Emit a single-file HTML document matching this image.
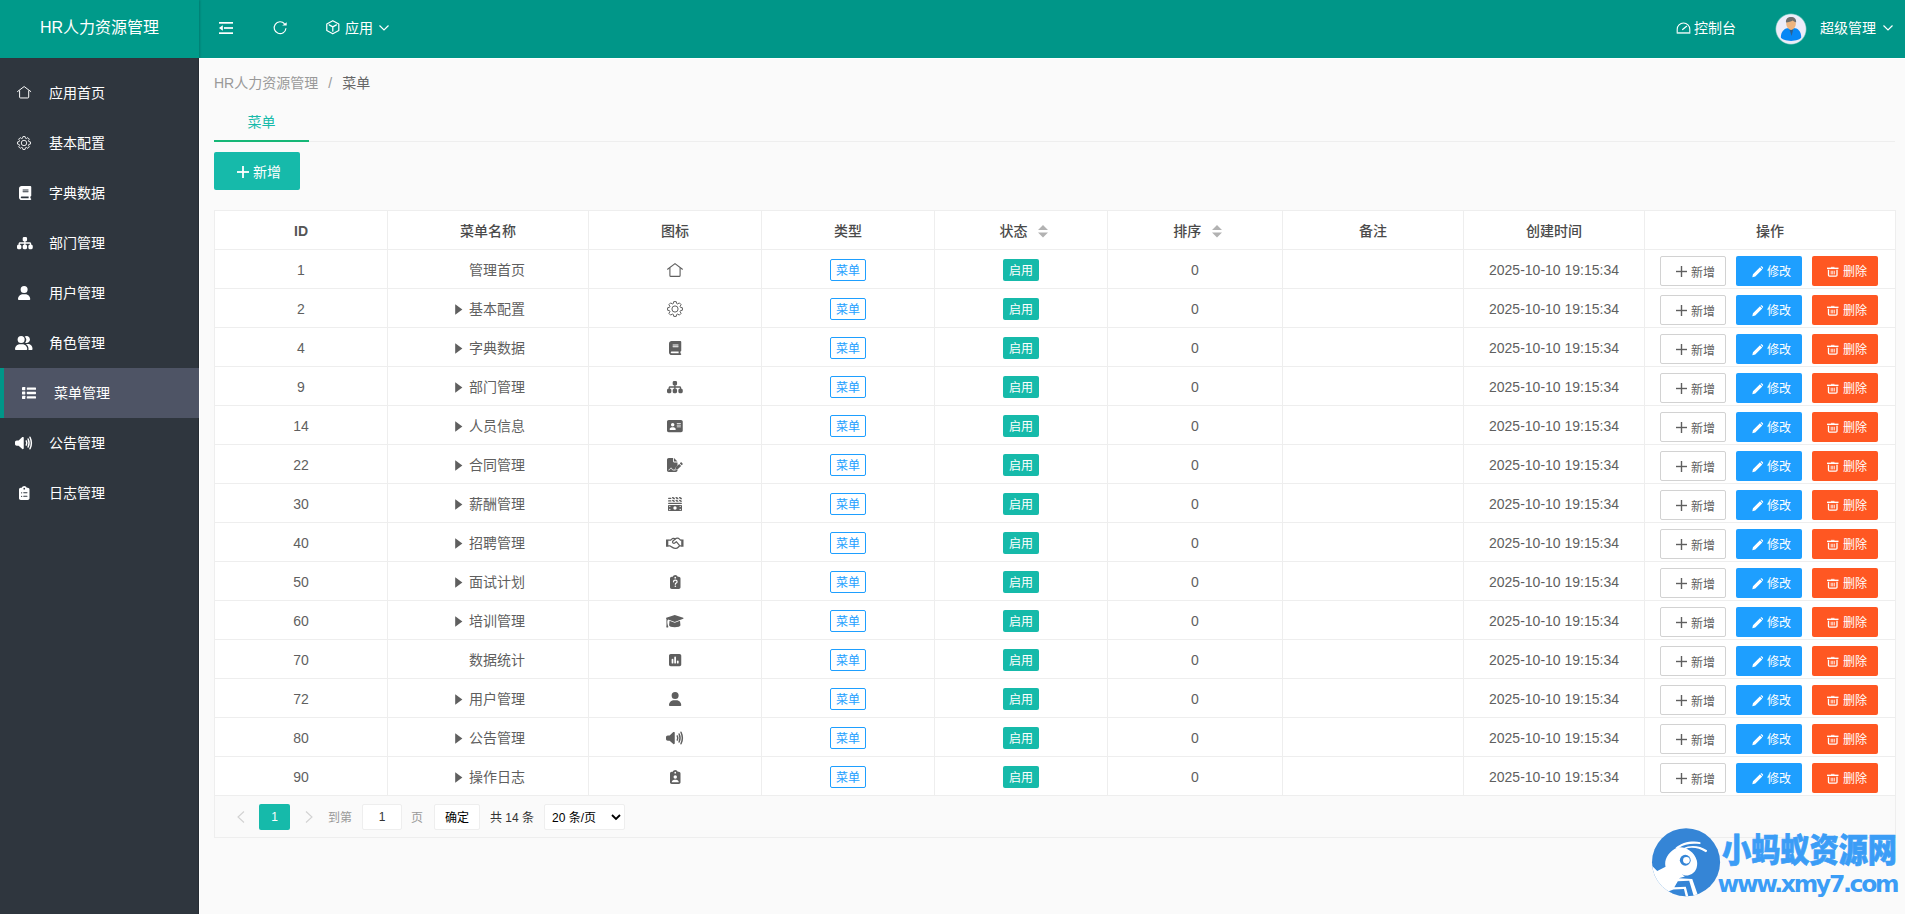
<!DOCTYPE html>
<html lang="zh-CN">
<head>
<meta charset="utf-8">
<title>HR人力资源管理</title>
<style>
*{box-sizing:border-box;margin:0;padding:0}
html,body{width:1905px;height:914px;overflow:hidden}
body{font-family:"Liberation Sans","Noto Sans CJK SC",sans-serif;font-size:14px;color:#333;background:#fafafa;position:relative;line-height:1}
svg{display:block;overflow:visible}
.a{position:absolute;white-space:nowrap}
.hd{position:absolute;left:0;top:0;width:1905px;height:58px;background:#009688}
.logo{position:absolute;left:0;top:0;width:199px;height:58px;background:#009a8a;box-shadow:1px 0 2px rgba(0,0,0,.18)}
.logo span{position:absolute;left:0;width:199px;top:0;line-height:55px;text-align:center;color:#fff;font-size:16px}
.ht{position:absolute;top:0;line-height:56px;height:58px;color:#fff;font-size:14px;white-space:nowrap}
.side{position:absolute;left:0;top:58px;width:199px;height:856px;background:#2f363e;box-shadow:inset -1px 0 1px rgba(0,0,0,.18)}
.it{position:absolute;left:0;width:199px;height:50px;color:#fff;font-size:14px}
.it span{position:absolute;left:49px;top:0;line-height:50px;white-space:nowrap}
.it.on{background:#4e5465}
.it.on i{position:absolute;left:0;top:0;width:4px;height:50px;background:#009688}
.it.on span{left:54px}
.main{position:absolute;left:199px;top:58px;width:1706px;height:856px;background:#fafafa;border-left:1px solid #fff;border-top:1px solid #fff}
.bc{position:absolute;left:214px;top:73px;font-size:14px;line-height:20px;color:#999;white-space:nowrap}
.bc b{font-weight:normal;color:#666}
.bc i{font-style:normal;display:inline-block;width:24px;text-align:center;color:#999}
.tabline{position:absolute;left:214px;top:141px;width:1681px;height:1px;background:#eee}
.tabon{position:absolute;left:214px;top:140px;width:95px;height:2px;background:#16b777}
.tabt{position:absolute;left:214px;top:101px;width:95px;line-height:42px;text-align:center;color:#16baaa;font-size:14px}
.badd{position:absolute;left:214px;top:152px;width:86px;height:38px;background:#16baaa;border-radius:2px;color:#fff}
.badd span{position:absolute;left:39px;top:0;line-height:41px;font-size:14px}
.tv{position:absolute;left:214px;top:210px;width:1682px;height:628px;border:1px solid #eee;background:#fafafa}
.tw{position:absolute;left:0;top:0;width:1680px;height:585px;background:#fff}
.hl{position:absolute;left:0;width:1680px;height:1px;background:#eee}
.vl{position:absolute;top:0;width:1px;height:585px;background:#eee}
.c{position:absolute;height:38px;line-height:40px;text-align:center;font-size:14px;color:#5f5f5f;white-space:nowrap}
.th{font-weight:500;color:#4a4a4a}
.idb{font-weight:bold;color:#555}
.bdg{position:absolute;width:36px;height:22px;line-height:24px;border-radius:2px;font-size:12px;text-align:center}
.bdg.r{border:1px solid #1e9fff;color:#1e9fff;background:#fff;line-height:22px}
.bdg.g{background:#16baaa;color:#fff}
.btn{position:absolute;width:66px;height:30px;border-radius:2px;font-size:12px;color:#fff}
.btn span{position:absolute;top:0;line-height:33px;white-space:nowrap}
.btn.p{border:1px solid #d2d2d2;background:#fff;color:#5f5f5f}
.btn.b{background:#1e9fff}
.btn.o{background:#ff5722}
.pg{font-size:12px;line-height:28px;height:26px;top:8px;overflow:hidden}
</style>
</head>
<body>
<div class="hd">
<div class="logo"><span>HR人力资源管理</span></div>
<svg class="a" style="left:219px;top:22px" width="14" height="12" viewBox="0 0 14 12" fill="#fff"><rect x="0" y="0" width="14" height="1.7"/><rect x="5" y="5.15" width="9" height="1.7"/><rect x="0" y="10.3" width="14" height="1.7"/><path d="M0 6 L3.8 3.2 V8.800z"/></svg>
<svg class="a" style="left:268px;top:16px" width="24" height="24" viewBox="0 0 24 24"><path d="M17.960 12.200 A5.900 5.900 0 1 1 16.600 7.900" fill="none" stroke="#fff" stroke-width="1.150"/><path d="M18.700 6.300 V9.550 H14.200z" fill="#fff"/></svg>
<svg class="a" style="left:326.400px;top:20.100px" width="13.600" height="14.500" viewBox="0 0 14 14.500" preserveAspectRatio="none" fill="none" stroke="#fff" stroke-width="1.250" stroke-linejoin="round"><path d="M7 0.700 L13.200 4 V10.500 L7 13.800 L0.800 10.500 V4z"/><path d="M3.300 4.900 L7 6.900 L10.700 4.900 M7 6.900 V11.200" stroke-linecap="round"/></svg>
<div class="ht" style="left:345px">应用</div>
<svg class="a" style="left:379px;top:24.500px" width="10" height="6" viewBox="0 0 10 6" fill="none" stroke="#fff" stroke-width="1.200"><path d="M0.500 0.500 L5 5 L9.500 0.500"/></svg>
<svg class="a" style="left:1676px;top:22px" width="15" height="12" viewBox="0 0 15 12" fill="none" stroke="#fff" stroke-width="1.100"><path d="M1.200 10.500 V7.300 A6.300 6.300 0 0 1 13.800 7.300 V10.500"/><rect x="0.700" y="10" width="13.600" height="1.900" fill="#fff" fill-opacity="0.700" stroke="none"/><path d="M6.600 7.500 L10.600 4.300" stroke-linecap="round" stroke-width="1.200"/></svg>
<div class="ht" style="left:1694px">控制台</div>
<svg class="a" style="left:1765px;top:5px" width="50" height="50" viewBox="0 0 914 914"><defs><clipPath id="av"><circle cx="475" cy="440" r="272"/></clipPath><radialGradient id="avg" cx="50%" cy="50%" r="50%"><stop offset="0.880" stop-color="#fff" stop-opacity="0.900"/><stop offset="1" stop-color="#fff" stop-opacity="0"/></radialGradient></defs><circle cx="475" cy="440" r="292" fill="url(#avg)"/><circle cx="475" cy="440" r="268" fill="#edecf9"/><g clip-path="url(#av)"><path d="M290 590 C290 480 360 420 440 420 L520 420 C600 420 662 480 662 590 C662 620 560 657 476 657 C392 657 290 620 290 590z" fill="#0787f5"/><path d="M440 425 L520 425 L486 568z" fill="#2f5f8c"/><path d="M432 400 H522 V440 Q477 470 432 440z" fill="#efb47f"/><ellipse cx="476" cy="345" rx="88" ry="98" fill="#efb47f"/><path d="M384 320 C375 250 420 218 476 218 C535 218 580 255 568 322 C540 312 520 300 505 285 C480 305 430 318 384 320z" fill="#6e6e6e"/></g></svg>
<div class="ht" style="left:1820px">超级管理</div>
<svg class="a" style="left:1882.500px;top:24.500px" width="10" height="6" viewBox="0 0 10 6" fill="none" stroke="#fff" stroke-width="1.200"><path d="M0.500 0.500 L5 5 L9.500 0.500"/></svg>
</div>
<div class="side">
<div class="it" style="top:10px"><svg width="14.3" height="12.5" viewBox="0 0 16 14" fill="currentColor" style="position:absolute;left:17px;top:18.45px"><path d="M0.600 6.200 L8 0.600 L15.400 6.200" fill="none" stroke="currentColor" stroke-width="1.100" stroke-linecap="round" stroke-linejoin="miter"/><path d="M2.900 5 V12.400 Q2.900 13.400 3.900 13.400 H12.100 Q13.100 13.400 13.100 12.400 V5" fill="none" stroke="currentColor" stroke-width="1.100"/></svg><span>应用首页</span></div>
<div class="it" style="top:60px"><svg width="14" height="14" viewBox="0 0 16 16" fill="currentColor" style="position:absolute;left:17px;top:17.7px"><path d="M6.30 2.56 L6.77 0.60 L9.23 0.60 L9.70 2.56 L10.65 2.95 L12.36 1.90 L14.10 3.64 L13.05 5.35 L13.44 6.30 L15.40 6.77 L15.40 9.23 L13.44 9.70 L13.05 10.65 L14.10 12.36 L12.36 14.10 L10.65 13.05 L9.70 13.44 L9.23 15.40 L6.77 15.40 L6.30 13.44 L5.35 13.05 L3.64 14.10 L1.90 12.36 L2.95 10.65 L2.56 9.70 L0.60 9.23 L0.60 6.77 L2.56 6.30 L2.95 5.35 L1.90 3.64 L3.64 1.90 L5.35 2.95Z" fill="none" stroke="currentColor" stroke-width="1" stroke-linejoin="round"/><circle cx="8" cy="8" r="3.100" fill="none" stroke="currentColor" stroke-width="1"/></svg><span>基本配置</span></div>
<div class="it" style="top:110px"><svg width="12.25" height="14" viewBox="0 0 448 512" fill="currentColor" style="position:absolute;left:19px;top:17.7px"><path d="M96 0C43 0 0 43 0 96V416c0 53 43 96 96 96H416c17.700 0 32-14.300 32-32s-14.300-32-32-32V384c17.700 0 32-14.300 32-32V32c0-17.700-14.300-32-32-32H96zm0 384H352v64H96c-17.700 0-32-14.300-32-32s14.300-32 32-32zm32-240c0-8.800 7.200-16 16-16H336c8.800 0 16 7.200 16 16s-7.200 16-16 16H144c-8.800 0-16-7.200-16-16zm16 48H336c8.800 0 16 7.200 16 16s-7.200 16-16 16H144c-8.800 0-16-7.200-16-16s7.200-16 16-16z"/></svg><span>字典数据</span></div>
<div class="it" style="top:160px"><svg width="15.75" height="14" viewBox="0 0 576 512" fill="currentColor" style="position:absolute;left:16.5px;top:17.7px"><path d="M208 80c0-26.500 21.500-48 48-48h64c26.500 0 48 21.500 48 48v64c0 26.500-21.500 48-48 48h-8v40H464c30.900 0 56 25.100 56 56v32h8c26.500 0 48 21.500 48 48v64c0 26.500-21.500 48-48 48H464c-26.500 0-48-21.500-48-48V368c0-26.500 21.500-48 48-48h8V288c0-4.400-3.600-8-8-8H312v40h8c26.500 0 48 21.500 48 48v64c0 26.500-21.500 48-48 48H256c-26.500 0-48-21.500-48-48V368c0-26.500 21.500-48 48-48h8V280H112c-4.400 0-8 3.600-8 8v32h8c26.500 0 48 21.500 48 48v64c0 26.500-21.500 48-48 48H48c-26.500 0-48-21.500-48-48V368c0-26.500 21.500-48 48-48h8V288c0-30.900 25.100-56 56-56H264V192h-8c-26.500 0-48-21.500-48-48V80z"/></svg><span>部门管理</span></div>
<div class="it" style="top:210px"><svg width="12.25" height="14" viewBox="0 0 448 512" fill="currentColor" style="position:absolute;left:18px;top:17.7px"><path d="M224 256A128 128 0 1 0 224 0a128 128 0 1 0 0 256zm-45.700 48C79.800 304 0 383.800 0 482.300C0 498.700 13.300 512 29.700 512H418.300c16.400 0 29.700-13.300 29.700-29.700C448 383.800 368.200 304 269.700 304H178.300z"/></svg><span>用户管理</span></div>
<div class="it" style="top:260px"><svg width="17.5" height="14" viewBox="0 0 640 512" fill="currentColor" style="position:absolute;left:15px;top:17.7px"><circle cx="224" cy="128" r="128"/><path d="M178.300 304C79.800 304 0 383.800 0 482.300C0 498.700 13.300 512 29.700 512H418.300c16.400 0 29.700-13.300 29.700-29.700C448 383.800 368.200 304 269.700 304H178.300z"/><path d="M352 18 A128 128 0 1 1 372 246 A170 170 0 0 0 352 18z"/><path d="M400 296 H470 C564 296 640 372 640 466 V482 C640 498.600 626.600 512 610 512 H486 C492 500 495 488 495 476 C495 400 455 335 400 296z"/></svg><span>角色管理</span></div>
<div class="it on" style="top:310px"><i></i><svg width="14" height="14" viewBox="0 0 512 512" fill="currentColor" style="position:absolute;left:22px;top:17.7px"><rect x="0" y="40" width="120" height="112" rx="16"/><rect x="0" y="200" width="120" height="112" rx="16"/><rect x="0" y="360" width="120" height="112" rx="16"/><rect x="176" y="56" width="336" height="84" rx="20"/><rect x="176" y="214" width="336" height="84" rx="20"/><rect x="176" y="372" width="336" height="84" rx="20"/></svg><span>菜单管理</span></div>
<div class="it" style="top:360px"><svg width="17.5" height="14" viewBox="0 0 640 512" fill="currentColor" style="position:absolute;left:15px;top:17.7px"><path d="M301 34.800C312.600 40 320 51.400 320 64V448c0 12.600-7.400 24-18.900 29.200s-25 3.100-34.400-5.300L131.800 352H64c-35.300 0-64-28.700-64-64V224c0-35.300 28.700-64 64-64h67.800L266.700 40.100c9.400-8.400 22.900-10.400 34.400-5.300z"/><path d="M412 180 Q450 256 412 332" fill="none" stroke="currentColor" stroke-width="54" stroke-linecap="round"/><path d="M480 110 Q548 256 480 402" fill="none" stroke="currentColor" stroke-width="54" stroke-linecap="round"/><path d="M548 44 Q650 256 548 468" fill="none" stroke="currentColor" stroke-width="54" stroke-linecap="round"/></svg><span>公告管理</span></div>
<div class="it" style="top:410px"><svg width="10.5" height="14" viewBox="0 0 384 512" fill="currentColor" style="position:absolute;left:19px;top:17.7px"><path fill-rule="evenodd" d="M192 0c-41.800 0-77.400 26.700-90.500 64H64C28.700 64 0 92.700 0 128V448c0 35.300 28.700 64 64 64H320c35.300 0 64-28.700 64-64V128c0-35.300-28.700-64-64-64H282.500C269.400 26.700 233.800 0 192 0zm0 64a32 32 0 1 1 0 64 32 32 0 1 1 0-64z M72 248 a24 24 0 1 1 48 0 a24 24 0 1 1 -48 0z M72 376 a24 24 0 1 1 48 0 a24 24 0 1 1 -48 0z M168 232 h128 a16 16 0 0 1 0 32 h-128 a16 16 0 0 1 0 -32z M168 360 h128 a16 16 0 0 1 0 32 h-128 a16 16 0 0 1 0 -32z"/></svg><span>日志管理</span></div>
</div>
<div class="main"></div>
<div class="bc">HR人力资源管理<i>/</i><b>菜单</b></div>
<div class="tabline"></div><div class="tabon"></div><div class="tabt">菜单</div>
<div class="badd"><svg class="a" style="left:23px;top:13.700px" width="12" height="12" viewBox="0 0 12 12" fill="#fff"><rect x="0" y="5.100" width="12" height="1.800"/><rect x="5.100" y="0" width="1.800" height="12"/></svg><span>新增</span></div>
<div class="tv"><div class="tw">
<div class="vl" style="left:172px"></div>
<div class="vl" style="left:373px"></div>
<div class="vl" style="left:546px"></div>
<div class="vl" style="left:719px"></div>
<div class="vl" style="left:892px"></div>
<div class="vl" style="left:1067px"></div>
<div class="vl" style="left:1248px"></div>
<div class="vl" style="left:1429px"></div>
<div class="hl" style="top:38px"></div>
<div class="hl" style="top:77px"></div>
<div class="hl" style="top:116px"></div>
<div class="hl" style="top:155px"></div>
<div class="hl" style="top:194px"></div>
<div class="hl" style="top:233px"></div>
<div class="hl" style="top:272px"></div>
<div class="hl" style="top:311px"></div>
<div class="hl" style="top:350px"></div>
<div class="hl" style="top:389px"></div>
<div class="hl" style="top:428px"></div>
<div class="hl" style="top:467px"></div>
<div class="hl" style="top:506px"></div>
<div class="hl" style="top:545px"></div>
<div class="hl" style="top:584px"></div>
<div class="c th idb" style="left:0px;top:0px;width:172px">ID</div>
<div class="c th" style="left:173px;top:0px;width:200px">菜单名称</div>
<div class="c th" style="left:374px;top:0px;width:172px">图标</div>
<div class="c th" style="left:547px;top:0px;width:172px">类型</div>
<div class="c th" style="left:784.5px;top:0;width:28px">状态</div>
<svg class="a" style="left:822.5px;top:14.199999999999989px" width="10" height="13" viewBox="0 0 10 13" fill="#b2b2b2"><path d="M0 5 L5 0 L10 5z M0 7.500 L5 12.500 L10 7.500z"/></svg>
<div class="c th" style="left:958.3px;top:0;width:28px">排序</div>
<svg class="a" style="left:997.3px;top:14.199999999999989px" width="10" height="13" viewBox="0 0 10 13" fill="#b2b2b2"><path d="M0 5 L5 0 L10 5z M0 7.500 L5 12.500 L10 7.500z"/></svg>
<div class="c th" style="left:1068px;top:0px;width:180px">备注</div>
<div class="c th" style="left:1249px;top:0px;width:180px">创建时间</div>
<div class="c th" style="left:1430px;top:0px;width:250px">操作</div>
<div class="c " style="left:0px;top:39px;width:172px">1</div>
<div class="c" style="left:254px;top:39px;width:56px">管理首页</div>
<svg width="16" height="14" viewBox="0 0 16 14" fill="currentColor" style="position:absolute;left:452.0px;top:51.5px;color:#5f5f5f"><path d="M0.600 6.200 L8 0.600 L15.400 6.200" fill="none" stroke="currentColor" stroke-width="1.100" stroke-linecap="round" stroke-linejoin="miter"/><path d="M2.900 5 V12.400 Q2.900 13.400 3.900 13.400 H12.100 Q13.100 13.400 13.100 12.400 V5" fill="none" stroke="currentColor" stroke-width="1.100"/></svg>
<div class="bdg r" style="left:615px;top:48px">菜单</div>
<div class="bdg g" style="left:788px;top:48px">启用</div>
<div class="c " style="left:893px;top:39px;width:174px">0</div>
<div class="c " style="left:1249px;top:39px;width:180px">2025-10-10 19:15:34</div>
<div class="btn p" style="left:1445px;top:45px"><svg class="a" style="left:14.500px;top:8.500px" width="11" height="11" viewBox="0 0 11 11" fill="#5f5f5f"><rect x="0" y="4.800" width="11" height="1.400"/><rect x="4.800" y="0" width="1.400" height="11"/></svg><span style="left:30px">新增</span></div>
<div class="btn b" style="left:1521px;top:45px"><svg class="a" style="left:15.500px;top:9.500px" width="11.500" height="11.500" viewBox="0 0 12 12" fill="#fff"><path d="M0.300 11.700 L1 8.600 L8.300 1.300 L10.700 3.700 L3.400 11z M9 0.700 C9.500 0.200 10.200 0.200 10.700 0.700 L11.300 1.300 C11.800 1.800 11.800 2.500 11.300 3 L11.200 3.100 L8.900 0.800z"/></svg><span style="left:31px">修改</span></div>
<div class="btn o" style="left:1597px;top:45px"><svg class="a" style="left:15px;top:11px" width="11.500" height="9.800" viewBox="0 0 11.500 11" preserveAspectRatio="none" fill="none" stroke="#fff"><path d="M0 1.500 H11.500" stroke-width="1.600"/><path d="M1.500 3 V9.300 Q1.500 10.300 2.500 10.300 H9 Q10 10.300 10 9.300 V3" stroke-width="1.300"/><path d="M4.200 4.200 V8.300 M5.750 4.200 V8.300 M7.300 4.200 V8.300" stroke-width="0.900"/><path d="M4 0.400 H7.500" stroke-width="0.900"/></svg><span style="left:31px">删除</span></div>
<div class="c " style="left:0px;top:78px;width:172px">2</div>
<div class="c" style="left:254px;top:78px;width:56px">基本配置</div>
<svg class="a" style="left:240.3px;top:93.39999999999998px" width="7.500" height="11" viewBox="0 0 7.500 11" fill="#5f5f5f"><path d="M0.200 0.300 L7.400 5.500 L0.200 10.700z"/></svg>
<svg width="16" height="16" viewBox="0 0 16 16" fill="currentColor" style="position:absolute;left:452.0px;top:89.5px;color:#5f5f5f"><path d="M6.30 2.56 L6.77 0.60 L9.23 0.60 L9.70 2.56 L10.65 2.95 L12.36 1.90 L14.10 3.64 L13.05 5.35 L13.44 6.30 L15.40 6.77 L15.40 9.23 L13.44 9.70 L13.05 10.65 L14.10 12.36 L12.36 14.10 L10.65 13.05 L9.70 13.44 L9.23 15.40 L6.77 15.40 L6.30 13.44 L5.35 13.05 L3.64 14.10 L1.90 12.36 L2.95 10.65 L2.56 9.70 L0.60 9.23 L0.60 6.77 L2.56 6.30 L2.95 5.35 L1.90 3.64 L3.64 1.90 L5.35 2.95Z" fill="none" stroke="currentColor" stroke-width="1" stroke-linejoin="round"/><circle cx="8" cy="8" r="3.100" fill="none" stroke="currentColor" stroke-width="1"/></svg>
<div class="bdg r" style="left:615px;top:87px">菜单</div>
<div class="bdg g" style="left:788px;top:87px">启用</div>
<div class="c " style="left:893px;top:78px;width:174px">0</div>
<div class="c " style="left:1249px;top:78px;width:180px">2025-10-10 19:15:34</div>
<div class="btn p" style="left:1445px;top:84px"><svg class="a" style="left:14.500px;top:8.500px" width="11" height="11" viewBox="0 0 11 11" fill="#5f5f5f"><rect x="0" y="4.800" width="11" height="1.400"/><rect x="4.800" y="0" width="1.400" height="11"/></svg><span style="left:30px">新增</span></div>
<div class="btn b" style="left:1521px;top:84px"><svg class="a" style="left:15.500px;top:9.500px" width="11.500" height="11.500" viewBox="0 0 12 12" fill="#fff"><path d="M0.300 11.700 L1 8.600 L8.300 1.300 L10.700 3.700 L3.400 11z M9 0.700 C9.500 0.200 10.200 0.200 10.700 0.700 L11.300 1.300 C11.800 1.800 11.800 2.500 11.300 3 L11.200 3.100 L8.900 0.800z"/></svg><span style="left:31px">修改</span></div>
<div class="btn o" style="left:1597px;top:84px"><svg class="a" style="left:15px;top:11px" width="11.500" height="9.800" viewBox="0 0 11.500 11" preserveAspectRatio="none" fill="none" stroke="#fff"><path d="M0 1.500 H11.500" stroke-width="1.600"/><path d="M1.500 3 V9.300 Q1.500 10.300 2.500 10.300 H9 Q10 10.300 10 9.300 V3" stroke-width="1.300"/><path d="M4.200 4.200 V8.300 M5.750 4.200 V8.300 M7.300 4.200 V8.300" stroke-width="0.900"/><path d="M4 0.400 H7.500" stroke-width="0.900"/></svg><span style="left:31px">删除</span></div>
<div class="c " style="left:0px;top:117px;width:172px">4</div>
<div class="c" style="left:254px;top:117px;width:56px">字典数据</div>
<svg class="a" style="left:240.3px;top:132.39999999999998px" width="7.500" height="11" viewBox="0 0 7.500 11" fill="#5f5f5f"><path d="M0.200 0.300 L7.400 5.500 L0.200 10.700z"/></svg>
<svg width="12.25" height="14" viewBox="0 0 448 512" fill="currentColor" style="position:absolute;left:453.875px;top:129.5px;color:#5f5f5f"><path d="M96 0C43 0 0 43 0 96V416c0 53 43 96 96 96H416c17.700 0 32-14.300 32-32s-14.300-32-32-32V384c17.700 0 32-14.300 32-32V32c0-17.700-14.300-32-32-32H96zm0 384H352v64H96c-17.700 0-32-14.300-32-32s14.300-32 32-32zm32-240c0-8.800 7.200-16 16-16H336c8.800 0 16 7.200 16 16s-7.200 16-16 16H144c-8.800 0-16-7.200-16-16zm16 48H336c8.800 0 16 7.200 16 16s-7.200 16-16 16H144c-8.800 0-16-7.200-16-16s7.200-16 16-16z"/></svg>
<div class="bdg r" style="left:615px;top:126px">菜单</div>
<div class="bdg g" style="left:788px;top:126px">启用</div>
<div class="c " style="left:893px;top:117px;width:174px">0</div>
<div class="c " style="left:1249px;top:117px;width:180px">2025-10-10 19:15:34</div>
<div class="btn p" style="left:1445px;top:123px"><svg class="a" style="left:14.500px;top:8.500px" width="11" height="11" viewBox="0 0 11 11" fill="#5f5f5f"><rect x="0" y="4.800" width="11" height="1.400"/><rect x="4.800" y="0" width="1.400" height="11"/></svg><span style="left:30px">新增</span></div>
<div class="btn b" style="left:1521px;top:123px"><svg class="a" style="left:15.500px;top:9.500px" width="11.500" height="11.500" viewBox="0 0 12 12" fill="#fff"><path d="M0.300 11.700 L1 8.600 L8.300 1.300 L10.700 3.700 L3.400 11z M9 0.700 C9.500 0.200 10.200 0.200 10.700 0.700 L11.300 1.300 C11.800 1.800 11.800 2.500 11.300 3 L11.200 3.100 L8.900 0.800z"/></svg><span style="left:31px">修改</span></div>
<div class="btn o" style="left:1597px;top:123px"><svg class="a" style="left:15px;top:11px" width="11.500" height="9.800" viewBox="0 0 11.500 11" preserveAspectRatio="none" fill="none" stroke="#fff"><path d="M0 1.500 H11.500" stroke-width="1.600"/><path d="M1.500 3 V9.300 Q1.500 10.300 2.500 10.300 H9 Q10 10.300 10 9.300 V3" stroke-width="1.300"/><path d="M4.200 4.200 V8.300 M5.750 4.200 V8.300 M7.300 4.200 V8.300" stroke-width="0.900"/><path d="M4 0.400 H7.500" stroke-width="0.900"/></svg><span style="left:31px">删除</span></div>
<div class="c " style="left:0px;top:156px;width:172px">9</div>
<div class="c" style="left:254px;top:156px;width:56px">部门管理</div>
<svg class="a" style="left:240.3px;top:171.39999999999998px" width="7.500" height="11" viewBox="0 0 7.500 11" fill="#5f5f5f"><path d="M0.200 0.300 L7.400 5.500 L0.200 10.700z"/></svg>
<svg width="15.75" height="14" viewBox="0 0 576 512" fill="currentColor" style="position:absolute;left:452.125px;top:168.5px;color:#5f5f5f"><path d="M208 80c0-26.500 21.500-48 48-48h64c26.500 0 48 21.500 48 48v64c0 26.500-21.500 48-48 48h-8v40H464c30.900 0 56 25.100 56 56v32h8c26.500 0 48 21.500 48 48v64c0 26.500-21.500 48-48 48H464c-26.500 0-48-21.500-48-48V368c0-26.500 21.500-48 48-48h8V288c0-4.400-3.600-8-8-8H312v40h8c26.500 0 48 21.500 48 48v64c0 26.500-21.500 48-48 48H256c-26.500 0-48-21.500-48-48V368c0-26.500 21.500-48 48-48h8V280H112c-4.400 0-8 3.600-8 8v32h8c26.500 0 48 21.500 48 48v64c0 26.500-21.500 48-48 48H48c-26.500 0-48-21.500-48-48V368c0-26.500 21.500-48 48-48h8V288c0-30.900 25.100-56 56-56H264V192h-8c-26.500 0-48-21.500-48-48V80z"/></svg>
<div class="bdg r" style="left:615px;top:165px">菜单</div>
<div class="bdg g" style="left:788px;top:165px">启用</div>
<div class="c " style="left:893px;top:156px;width:174px">0</div>
<div class="c " style="left:1249px;top:156px;width:180px">2025-10-10 19:15:34</div>
<div class="btn p" style="left:1445px;top:162px"><svg class="a" style="left:14.500px;top:8.500px" width="11" height="11" viewBox="0 0 11 11" fill="#5f5f5f"><rect x="0" y="4.800" width="11" height="1.400"/><rect x="4.800" y="0" width="1.400" height="11"/></svg><span style="left:30px">新增</span></div>
<div class="btn b" style="left:1521px;top:162px"><svg class="a" style="left:15.500px;top:9.500px" width="11.500" height="11.500" viewBox="0 0 12 12" fill="#fff"><path d="M0.300 11.700 L1 8.600 L8.300 1.300 L10.700 3.700 L3.400 11z M9 0.700 C9.500 0.200 10.200 0.200 10.700 0.700 L11.300 1.300 C11.800 1.800 11.800 2.500 11.300 3 L11.200 3.100 L8.900 0.800z"/></svg><span style="left:31px">修改</span></div>
<div class="btn o" style="left:1597px;top:162px"><svg class="a" style="left:15px;top:11px" width="11.500" height="9.800" viewBox="0 0 11.500 11" preserveAspectRatio="none" fill="none" stroke="#fff"><path d="M0 1.500 H11.500" stroke-width="1.600"/><path d="M1.500 3 V9.300 Q1.500 10.300 2.500 10.300 H9 Q10 10.300 10 9.300 V3" stroke-width="1.300"/><path d="M4.200 4.200 V8.300 M5.750 4.200 V8.300 M7.300 4.200 V8.300" stroke-width="0.900"/><path d="M4 0.400 H7.500" stroke-width="0.900"/></svg><span style="left:31px">删除</span></div>
<div class="c " style="left:0px;top:195px;width:172px">14</div>
<div class="c" style="left:254px;top:195px;width:56px">人员信息</div>
<svg class="a" style="left:240.3px;top:210.39999999999998px" width="7.500" height="11" viewBox="0 0 7.500 11" fill="#5f5f5f"><path d="M0.200 0.300 L7.400 5.500 L0.200 10.700z"/></svg>
<svg width="15.75" height="14" viewBox="0 0 576 512" fill="currentColor" style="position:absolute;left:452.125px;top:207.5px;color:#5f5f5f"><path fill-rule="evenodd" d="M64 32C28.700 32 0 60.700 0 96V416c0 35.300 28.700 64 64 64H512c35.300 0 64-28.700 64-64V96c0-35.300-28.700-64-64-64H64z M144 208 a64 64 0 1 1 128 0 a64 64 0 1 1 -128 0z M96 384 C96 340 132 304 176 304 H240 C284 304 320 340 320 384 C320 393 313 400 304 400 H112 C103 400 96 393 96 384z M368 144 H496 a16 16 0 0 1 0 32 H368 a16 16 0 0 1 0 -32z M368 208 H496 a16 16 0 0 1 0 32 H368 a16 16 0 0 1 0 -32z M368 272 H496 a16 16 0 0 1 0 32 H368 a16 16 0 0 1 0 -32z"/></svg>
<div class="bdg r" style="left:615px;top:204px">菜单</div>
<div class="bdg g" style="left:788px;top:204px">启用</div>
<div class="c " style="left:893px;top:195px;width:174px">0</div>
<div class="c " style="left:1249px;top:195px;width:180px">2025-10-10 19:15:34</div>
<div class="btn p" style="left:1445px;top:201px"><svg class="a" style="left:14.500px;top:8.500px" width="11" height="11" viewBox="0 0 11 11" fill="#5f5f5f"><rect x="0" y="4.800" width="11" height="1.400"/><rect x="4.800" y="0" width="1.400" height="11"/></svg><span style="left:30px">新增</span></div>
<div class="btn b" style="left:1521px;top:201px"><svg class="a" style="left:15.500px;top:9.500px" width="11.500" height="11.500" viewBox="0 0 12 12" fill="#fff"><path d="M0.300 11.700 L1 8.600 L8.300 1.300 L10.700 3.700 L3.400 11z M9 0.700 C9.500 0.200 10.200 0.200 10.700 0.700 L11.300 1.300 C11.800 1.800 11.800 2.500 11.300 3 L11.200 3.100 L8.900 0.800z"/></svg><span style="left:31px">修改</span></div>
<div class="btn o" style="left:1597px;top:201px"><svg class="a" style="left:15px;top:11px" width="11.500" height="9.800" viewBox="0 0 11.500 11" preserveAspectRatio="none" fill="none" stroke="#fff"><path d="M0 1.500 H11.500" stroke-width="1.600"/><path d="M1.500 3 V9.300 Q1.500 10.300 2.500 10.300 H9 Q10 10.300 10 9.300 V3" stroke-width="1.300"/><path d="M4.200 4.200 V8.300 M5.750 4.200 V8.300 M7.300 4.200 V8.300" stroke-width="0.900"/><path d="M4 0.400 H7.500" stroke-width="0.900"/></svg><span style="left:31px">删除</span></div>
<div class="c " style="left:0px;top:234px;width:172px">22</div>
<div class="c" style="left:254px;top:234px;width:56px">合同管理</div>
<svg class="a" style="left:240.3px;top:249.39999999999998px" width="7.500" height="11" viewBox="0 0 7.500 11" fill="#5f5f5f"><path d="M0.200 0.300 L7.400 5.500 L0.200 10.700z"/></svg>
<svg width="15.75" height="14" viewBox="0 0 576 512" fill="currentColor" style="position:absolute;left:452.125px;top:246.5px;color:#5f5f5f"><path d="M64 0C28.700 0 0 28.700 0 64V448c0 35.300 28.700 64 64 64H320c35.300 0 64-28.700 64-64V428 L330 440 H280 L300 370 L384 286 V160H256c-17.700 0-32-14.300-32-32V0H64z M256 0V128H384L256 0z"/><path d="M70 440 C110 440 120 360 150 360 C175 360 170 440 230 440 H300" fill="none" stroke="#fff" stroke-width="30" stroke-linecap="round" stroke-linejoin="round"/><path d="M568 199 L537 168 C526 157 508 157 497 168 L468 197 L539 268 L568 239 C579 228 579 210 568 199z M446 220 L325 341 C321 345 318 350 317 355 L300 420 C298 428 305 435 313 433 L378 416 C383 415 388 412 392 408 L517 291 L446 220z"/></svg>
<div class="bdg r" style="left:615px;top:243px">菜单</div>
<div class="bdg g" style="left:788px;top:243px">启用</div>
<div class="c " style="left:893px;top:234px;width:174px">0</div>
<div class="c " style="left:1249px;top:234px;width:180px">2025-10-10 19:15:34</div>
<div class="btn p" style="left:1445px;top:240px"><svg class="a" style="left:14.500px;top:8.500px" width="11" height="11" viewBox="0 0 11 11" fill="#5f5f5f"><rect x="0" y="4.800" width="11" height="1.400"/><rect x="4.800" y="0" width="1.400" height="11"/></svg><span style="left:30px">新增</span></div>
<div class="btn b" style="left:1521px;top:240px"><svg class="a" style="left:15.500px;top:9.500px" width="11.500" height="11.500" viewBox="0 0 12 12" fill="#fff"><path d="M0.300 11.700 L1 8.600 L8.300 1.300 L10.700 3.700 L3.400 11z M9 0.700 C9.500 0.200 10.200 0.200 10.700 0.700 L11.300 1.300 C11.800 1.800 11.800 2.500 11.300 3 L11.200 3.100 L8.900 0.800z"/></svg><span style="left:31px">修改</span></div>
<div class="btn o" style="left:1597px;top:240px"><svg class="a" style="left:15px;top:11px" width="11.500" height="9.800" viewBox="0 0 11.500 11" preserveAspectRatio="none" fill="none" stroke="#fff"><path d="M0 1.500 H11.500" stroke-width="1.600"/><path d="M1.500 3 V9.300 Q1.500 10.300 2.500 10.300 H9 Q10 10.300 10 9.300 V3" stroke-width="1.300"/><path d="M4.200 4.200 V8.300 M5.750 4.200 V8.300 M7.300 4.200 V8.300" stroke-width="0.900"/><path d="M4 0.400 H7.500" stroke-width="0.900"/></svg><span style="left:31px">删除</span></div>
<div class="c " style="left:0px;top:273px;width:172px">30</div>
<div class="c" style="left:254px;top:273px;width:56px">薪酬管理</div>
<svg class="a" style="left:240.3px;top:288.4px" width="7.500" height="11" viewBox="0 0 7.500 11" fill="#5f5f5f"><path d="M0.200 0.300 L7.400 5.500 L0.200 10.700z"/></svg>
<svg width="14" height="14" viewBox="0 0 512 512" fill="currentColor" style="position:absolute;left:453.0px;top:285.5px;color:#5f5f5f"><rect x="0" y="288" width="512" height="224" rx="28"/><circle cx="256" cy="400" r="62" fill="#fff"/><circle cx="66" cy="342" r="24" fill="#fff"/><circle cx="66" cy="458" r="24" fill="#fff"/><circle cx="446" cy="342" r="24" fill="#fff"/><circle cx="446" cy="458" r="24" fill="#fff"/><path d="M176 0c44 0 80 36 80 80 h-32 c-44 0-80-36-80-80z M144 128c0-18 14-32 32-32 h0c44 0 80 36 80 80 h-32c-44 0-80-36-80-48z M304 0 c44 0 80 36 80 80 h-32 c-44 0-80-36-80-80z M272 128c0-18 14-32 32-32 h0c44 0 80 36 80 80 h-32c-44 0-80-36-80-48z M432 0 c44 0 80 36 80 80 h-32 c-44 0-80-36-80-80z M400 128c0-18 14-32 32-32 h0c44 0 80 36 80 80 h-32c-44 0-80-36-80-48z M24 24 H104 a24 24 0 0 1 0 48 H24 a24 24 0 0 1 0 -48z M24 120 H104 a24 24 0 0 1 0 48 H24 a24 24 0 0 1 0 -48z M24 208 H488 a24 24 0 0 1 0 48 H24 a24 24 0 0 1 0 -48z"/></svg>
<div class="bdg r" style="left:615px;top:282px">菜单</div>
<div class="bdg g" style="left:788px;top:282px">启用</div>
<div class="c " style="left:893px;top:273px;width:174px">0</div>
<div class="c " style="left:1249px;top:273px;width:180px">2025-10-10 19:15:34</div>
<div class="btn p" style="left:1445px;top:279px"><svg class="a" style="left:14.500px;top:8.500px" width="11" height="11" viewBox="0 0 11 11" fill="#5f5f5f"><rect x="0" y="4.800" width="11" height="1.400"/><rect x="4.800" y="0" width="1.400" height="11"/></svg><span style="left:30px">新增</span></div>
<div class="btn b" style="left:1521px;top:279px"><svg class="a" style="left:15.500px;top:9.500px" width="11.500" height="11.500" viewBox="0 0 12 12" fill="#fff"><path d="M0.300 11.700 L1 8.600 L8.300 1.300 L10.700 3.700 L3.400 11z M9 0.700 C9.500 0.200 10.200 0.200 10.700 0.700 L11.300 1.300 C11.800 1.800 11.800 2.500 11.300 3 L11.200 3.100 L8.900 0.800z"/></svg><span style="left:31px">修改</span></div>
<div class="btn o" style="left:1597px;top:279px"><svg class="a" style="left:15px;top:11px" width="11.500" height="9.800" viewBox="0 0 11.500 11" preserveAspectRatio="none" fill="none" stroke="#fff"><path d="M0 1.500 H11.500" stroke-width="1.600"/><path d="M1.500 3 V9.300 Q1.500 10.300 2.500 10.300 H9 Q10 10.300 10 9.300 V3" stroke-width="1.300"/><path d="M4.200 4.200 V8.300 M5.750 4.200 V8.300 M7.300 4.200 V8.300" stroke-width="0.900"/><path d="M4 0.400 H7.500" stroke-width="0.900"/></svg><span style="left:31px">删除</span></div>
<div class="c " style="left:0px;top:312px;width:172px">40</div>
<div class="c" style="left:254px;top:312px;width:56px">招聘管理</div>
<svg class="a" style="left:240.3px;top:327.4px" width="7.500" height="11" viewBox="0 0 7.500 11" fill="#5f5f5f"><path d="M0.200 0.300 L7.400 5.500 L0.200 10.700z"/></svg>
<svg width="17.5" height="14" viewBox="0 0 640 512" fill="currentColor" style="position:absolute;left:451.25px;top:324.5px;color:#5f5f5f"><path d="M0 130 H84 V390 H0z M556 130 H640 V390 H556z"/><g fill="none" stroke="currentColor" stroke-width="46" stroke-linejoin="round" stroke-linecap="round"><path d="M84 155 H165 L232 96 Q272 72 312 94 L336 110 Q372 78 422 82 Q462 86 492 114 L535 155 H556"/><path d="M556 364 H492 L446 412 Q400 462 340 452 Q290 452 250 426 L150 364 H84"/><path d="M336 110 L246 192 Q226 226 256 256 Q292 282 332 250 L376 206 L492 342"/></g></svg>
<div class="bdg r" style="left:615px;top:321px">菜单</div>
<div class="bdg g" style="left:788px;top:321px">启用</div>
<div class="c " style="left:893px;top:312px;width:174px">0</div>
<div class="c " style="left:1249px;top:312px;width:180px">2025-10-10 19:15:34</div>
<div class="btn p" style="left:1445px;top:318px"><svg class="a" style="left:14.500px;top:8.500px" width="11" height="11" viewBox="0 0 11 11" fill="#5f5f5f"><rect x="0" y="4.800" width="11" height="1.400"/><rect x="4.800" y="0" width="1.400" height="11"/></svg><span style="left:30px">新增</span></div>
<div class="btn b" style="left:1521px;top:318px"><svg class="a" style="left:15.500px;top:9.500px" width="11.500" height="11.500" viewBox="0 0 12 12" fill="#fff"><path d="M0.300 11.700 L1 8.600 L8.300 1.300 L10.700 3.700 L3.400 11z M9 0.700 C9.500 0.200 10.200 0.200 10.700 0.700 L11.300 1.300 C11.800 1.800 11.800 2.500 11.300 3 L11.200 3.100 L8.900 0.800z"/></svg><span style="left:31px">修改</span></div>
<div class="btn o" style="left:1597px;top:318px"><svg class="a" style="left:15px;top:11px" width="11.500" height="9.800" viewBox="0 0 11.500 11" preserveAspectRatio="none" fill="none" stroke="#fff"><path d="M0 1.500 H11.500" stroke-width="1.600"/><path d="M1.500 3 V9.300 Q1.500 10.300 2.500 10.300 H9 Q10 10.300 10 9.300 V3" stroke-width="1.300"/><path d="M4.200 4.200 V8.300 M5.750 4.200 V8.300 M7.300 4.200 V8.300" stroke-width="0.900"/><path d="M4 0.400 H7.500" stroke-width="0.900"/></svg><span style="left:31px">删除</span></div>
<div class="c " style="left:0px;top:351px;width:172px">50</div>
<div class="c" style="left:254px;top:351px;width:56px">面试计划</div>
<svg class="a" style="left:240.3px;top:366.4px" width="7.500" height="11" viewBox="0 0 7.500 11" fill="#5f5f5f"><path d="M0.200 0.300 L7.400 5.500 L0.200 10.700z"/></svg>
<svg width="10.5" height="14" viewBox="0 0 384 512" fill="currentColor" style="position:absolute;left:454.75px;top:363.5px;color:#5f5f5f"><path fill-rule="evenodd" d="M192 0c-41.800 0-77.400 26.700-90.500 64H64C28.700 64 0 92.700 0 128V448c0 35.300 28.700 64 64 64H320c35.300 0 64-28.700 64-64V128c0-35.300-28.700-64-64-64H282.500C269.400 26.700 233.800 0 192 0zm0 64a32 32 0 1 1 0 64 32 32 0 1 1 0-64z"/><path d="M128 250 C128 205 160 184 194 184 C232 184 260 208 260 244 C260 276 238 290 214 302 C200 310 196 318 196 336" fill="none" stroke="#fff" stroke-width="44" stroke-linecap="round"/><circle cx="196" cy="412" r="30" fill="#fff"/></svg>
<div class="bdg r" style="left:615px;top:360px">菜单</div>
<div class="bdg g" style="left:788px;top:360px">启用</div>
<div class="c " style="left:893px;top:351px;width:174px">0</div>
<div class="c " style="left:1249px;top:351px;width:180px">2025-10-10 19:15:34</div>
<div class="btn p" style="left:1445px;top:357px"><svg class="a" style="left:14.500px;top:8.500px" width="11" height="11" viewBox="0 0 11 11" fill="#5f5f5f"><rect x="0" y="4.800" width="11" height="1.400"/><rect x="4.800" y="0" width="1.400" height="11"/></svg><span style="left:30px">新增</span></div>
<div class="btn b" style="left:1521px;top:357px"><svg class="a" style="left:15.500px;top:9.500px" width="11.500" height="11.500" viewBox="0 0 12 12" fill="#fff"><path d="M0.300 11.700 L1 8.600 L8.300 1.300 L10.700 3.700 L3.400 11z M9 0.700 C9.500 0.200 10.200 0.200 10.700 0.700 L11.300 1.300 C11.800 1.800 11.800 2.500 11.300 3 L11.200 3.100 L8.900 0.800z"/></svg><span style="left:31px">修改</span></div>
<div class="btn o" style="left:1597px;top:357px"><svg class="a" style="left:15px;top:11px" width="11.500" height="9.800" viewBox="0 0 11.500 11" preserveAspectRatio="none" fill="none" stroke="#fff"><path d="M0 1.500 H11.500" stroke-width="1.600"/><path d="M1.500 3 V9.300 Q1.500 10.300 2.500 10.300 H9 Q10 10.300 10 9.300 V3" stroke-width="1.300"/><path d="M4.200 4.200 V8.300 M5.750 4.200 V8.300 M7.300 4.200 V8.300" stroke-width="0.900"/><path d="M4 0.400 H7.500" stroke-width="0.900"/></svg><span style="left:31px">删除</span></div>
<div class="c " style="left:0px;top:390px;width:172px">60</div>
<div class="c" style="left:254px;top:390px;width:56px">培训管理</div>
<svg class="a" style="left:240.3px;top:405.4px" width="7.500" height="11" viewBox="0 0 7.500 11" fill="#5f5f5f"><path d="M0.200 0.300 L7.400 5.500 L0.200 10.700z"/></svg>
<svg width="17.5" height="14" viewBox="0 0 640 512" fill="currentColor" style="position:absolute;left:451.25px;top:402.5px;color:#5f5f5f"><path d="M320 32 L630 140 C645 146 645 166 630 172 L320 288 L80 198 C60 215 50 240 48 270 V300 C48 350 70 420 85 470 C88 480 80 490 70 490 H25 C15 490 8 482 10 472 C22 420 16 350 16 300 V178 L10 172 C-5 166 -5 146 10 140z"/><path d="M128 250 L320 322 L512 250 L528 408 C528 450 435 480 320 480 C205 480 112 450 112 408z"/></svg>
<div class="bdg r" style="left:615px;top:399px">菜单</div>
<div class="bdg g" style="left:788px;top:399px">启用</div>
<div class="c " style="left:893px;top:390px;width:174px">0</div>
<div class="c " style="left:1249px;top:390px;width:180px">2025-10-10 19:15:34</div>
<div class="btn p" style="left:1445px;top:396px"><svg class="a" style="left:14.500px;top:8.500px" width="11" height="11" viewBox="0 0 11 11" fill="#5f5f5f"><rect x="0" y="4.800" width="11" height="1.400"/><rect x="4.800" y="0" width="1.400" height="11"/></svg><span style="left:30px">新增</span></div>
<div class="btn b" style="left:1521px;top:396px"><svg class="a" style="left:15.500px;top:9.500px" width="11.500" height="11.500" viewBox="0 0 12 12" fill="#fff"><path d="M0.300 11.700 L1 8.600 L8.300 1.300 L10.700 3.700 L3.400 11z M9 0.700 C9.500 0.200 10.200 0.200 10.700 0.700 L11.300 1.300 C11.800 1.800 11.800 2.500 11.300 3 L11.200 3.100 L8.900 0.800z"/></svg><span style="left:31px">修改</span></div>
<div class="btn o" style="left:1597px;top:396px"><svg class="a" style="left:15px;top:11px" width="11.500" height="9.800" viewBox="0 0 11.500 11" preserveAspectRatio="none" fill="none" stroke="#fff"><path d="M0 1.500 H11.500" stroke-width="1.600"/><path d="M1.500 3 V9.300 Q1.500 10.300 2.500 10.300 H9 Q10 10.300 10 9.300 V3" stroke-width="1.300"/><path d="M4.200 4.200 V8.300 M5.750 4.200 V8.300 M7.300 4.200 V8.300" stroke-width="0.900"/><path d="M4 0.400 H7.500" stroke-width="0.900"/></svg><span style="left:31px">删除</span></div>
<div class="c " style="left:0px;top:429px;width:172px">70</div>
<div class="c" style="left:254px;top:429px;width:56px">数据统计</div>
<svg width="12.25" height="14" viewBox="0 0 448 512" fill="currentColor" style="position:absolute;left:453.875px;top:441.5px;color:#5f5f5f"><path fill-rule="evenodd" d="M64 32C28.700 32 0 60.700 0 96V416c0 35.300 28.700 64 64 64H384c35.300 0 64-28.700 64-64V96c0-35.300-28.700-64-64-64H64z M96 240 a32 32 0 0 1 64 0 V352 a32 32 0 0 1 -64 0z M192 160 a32 32 0 0 1 64 0 V352 a32 32 0 0 1 -64 0z M288 304 a32 32 0 0 1 64 0 V352 a32 32 0 0 1 -64 0z"/></svg>
<div class="bdg r" style="left:615px;top:438px">菜单</div>
<div class="bdg g" style="left:788px;top:438px">启用</div>
<div class="c " style="left:893px;top:429px;width:174px">0</div>
<div class="c " style="left:1249px;top:429px;width:180px">2025-10-10 19:15:34</div>
<div class="btn p" style="left:1445px;top:435px"><svg class="a" style="left:14.500px;top:8.500px" width="11" height="11" viewBox="0 0 11 11" fill="#5f5f5f"><rect x="0" y="4.800" width="11" height="1.400"/><rect x="4.800" y="0" width="1.400" height="11"/></svg><span style="left:30px">新增</span></div>
<div class="btn b" style="left:1521px;top:435px"><svg class="a" style="left:15.500px;top:9.500px" width="11.500" height="11.500" viewBox="0 0 12 12" fill="#fff"><path d="M0.300 11.700 L1 8.600 L8.300 1.300 L10.700 3.700 L3.400 11z M9 0.700 C9.500 0.200 10.200 0.200 10.700 0.700 L11.300 1.300 C11.800 1.800 11.800 2.500 11.300 3 L11.200 3.100 L8.900 0.800z"/></svg><span style="left:31px">修改</span></div>
<div class="btn o" style="left:1597px;top:435px"><svg class="a" style="left:15px;top:11px" width="11.500" height="9.800" viewBox="0 0 11.500 11" preserveAspectRatio="none" fill="none" stroke="#fff"><path d="M0 1.500 H11.500" stroke-width="1.600"/><path d="M1.500 3 V9.300 Q1.500 10.300 2.500 10.300 H9 Q10 10.300 10 9.300 V3" stroke-width="1.300"/><path d="M4.200 4.200 V8.300 M5.750 4.200 V8.300 M7.300 4.200 V8.300" stroke-width="0.900"/><path d="M4 0.400 H7.500" stroke-width="0.900"/></svg><span style="left:31px">删除</span></div>
<div class="c " style="left:0px;top:468px;width:172px">72</div>
<div class="c" style="left:254px;top:468px;width:56px">用户管理</div>
<svg class="a" style="left:240.3px;top:483.4px" width="7.500" height="11" viewBox="0 0 7.500 11" fill="#5f5f5f"><path d="M0.200 0.300 L7.400 5.500 L0.200 10.700z"/></svg>
<svg width="12.25" height="14" viewBox="0 0 448 512" fill="currentColor" style="position:absolute;left:453.875px;top:480.5px;color:#5f5f5f"><path d="M224 256A128 128 0 1 0 224 0a128 128 0 1 0 0 256zm-45.700 48C79.800 304 0 383.800 0 482.300C0 498.700 13.300 512 29.700 512H418.300c16.400 0 29.700-13.300 29.700-29.700C448 383.800 368.200 304 269.700 304H178.300z"/></svg>
<div class="bdg r" style="left:615px;top:477px">菜单</div>
<div class="bdg g" style="left:788px;top:477px">启用</div>
<div class="c " style="left:893px;top:468px;width:174px">0</div>
<div class="c " style="left:1249px;top:468px;width:180px">2025-10-10 19:15:34</div>
<div class="btn p" style="left:1445px;top:474px"><svg class="a" style="left:14.500px;top:8.500px" width="11" height="11" viewBox="0 0 11 11" fill="#5f5f5f"><rect x="0" y="4.800" width="11" height="1.400"/><rect x="4.800" y="0" width="1.400" height="11"/></svg><span style="left:30px">新增</span></div>
<div class="btn b" style="left:1521px;top:474px"><svg class="a" style="left:15.500px;top:9.500px" width="11.500" height="11.500" viewBox="0 0 12 12" fill="#fff"><path d="M0.300 11.700 L1 8.600 L8.300 1.300 L10.700 3.700 L3.400 11z M9 0.700 C9.500 0.200 10.200 0.200 10.700 0.700 L11.300 1.300 C11.800 1.800 11.800 2.500 11.300 3 L11.200 3.100 L8.900 0.800z"/></svg><span style="left:31px">修改</span></div>
<div class="btn o" style="left:1597px;top:474px"><svg class="a" style="left:15px;top:11px" width="11.500" height="9.800" viewBox="0 0 11.500 11" preserveAspectRatio="none" fill="none" stroke="#fff"><path d="M0 1.500 H11.500" stroke-width="1.600"/><path d="M1.500 3 V9.300 Q1.500 10.300 2.500 10.300 H9 Q10 10.300 10 9.300 V3" stroke-width="1.300"/><path d="M4.200 4.200 V8.300 M5.750 4.200 V8.300 M7.300 4.200 V8.300" stroke-width="0.900"/><path d="M4 0.400 H7.500" stroke-width="0.900"/></svg><span style="left:31px">删除</span></div>
<div class="c " style="left:0px;top:507px;width:172px">80</div>
<div class="c" style="left:254px;top:507px;width:56px">公告管理</div>
<svg class="a" style="left:240.3px;top:522.4px" width="7.500" height="11" viewBox="0 0 7.500 11" fill="#5f5f5f"><path d="M0.200 0.300 L7.400 5.500 L0.200 10.700z"/></svg>
<svg width="17.5" height="14" viewBox="0 0 640 512" fill="currentColor" style="position:absolute;left:451.25px;top:519.5px;color:#5f5f5f"><path d="M301 34.800C312.600 40 320 51.400 320 64V448c0 12.600-7.400 24-18.900 29.200s-25 3.100-34.400-5.300L131.800 352H64c-35.300 0-64-28.700-64-64V224c0-35.300 28.700-64 64-64h67.800L266.700 40.100c9.400-8.400 22.900-10.400 34.400-5.300z"/><path d="M412 180 Q450 256 412 332" fill="none" stroke="currentColor" stroke-width="54" stroke-linecap="round"/><path d="M480 110 Q548 256 480 402" fill="none" stroke="currentColor" stroke-width="54" stroke-linecap="round"/><path d="M548 44 Q650 256 548 468" fill="none" stroke="currentColor" stroke-width="54" stroke-linecap="round"/></svg>
<div class="bdg r" style="left:615px;top:516px">菜单</div>
<div class="bdg g" style="left:788px;top:516px">启用</div>
<div class="c " style="left:893px;top:507px;width:174px">0</div>
<div class="c " style="left:1249px;top:507px;width:180px">2025-10-10 19:15:34</div>
<div class="btn p" style="left:1445px;top:513px"><svg class="a" style="left:14.500px;top:8.500px" width="11" height="11" viewBox="0 0 11 11" fill="#5f5f5f"><rect x="0" y="4.800" width="11" height="1.400"/><rect x="4.800" y="0" width="1.400" height="11"/></svg><span style="left:30px">新增</span></div>
<div class="btn b" style="left:1521px;top:513px"><svg class="a" style="left:15.500px;top:9.500px" width="11.500" height="11.500" viewBox="0 0 12 12" fill="#fff"><path d="M0.300 11.700 L1 8.600 L8.300 1.300 L10.700 3.700 L3.400 11z M9 0.700 C9.500 0.200 10.200 0.200 10.700 0.700 L11.300 1.300 C11.800 1.800 11.800 2.500 11.300 3 L11.200 3.100 L8.900 0.800z"/></svg><span style="left:31px">修改</span></div>
<div class="btn o" style="left:1597px;top:513px"><svg class="a" style="left:15px;top:11px" width="11.500" height="9.800" viewBox="0 0 11.500 11" preserveAspectRatio="none" fill="none" stroke="#fff"><path d="M0 1.500 H11.500" stroke-width="1.600"/><path d="M1.500 3 V9.300 Q1.500 10.300 2.500 10.300 H9 Q10 10.300 10 9.300 V3" stroke-width="1.300"/><path d="M4.200 4.200 V8.300 M5.750 4.200 V8.300 M7.300 4.200 V8.300" stroke-width="0.900"/><path d="M4 0.400 H7.500" stroke-width="0.900"/></svg><span style="left:31px">删除</span></div>
<div class="c " style="left:0px;top:546px;width:172px">90</div>
<div class="c" style="left:254px;top:546px;width:56px">操作日志</div>
<svg class="a" style="left:240.3px;top:561.4px" width="7.500" height="11" viewBox="0 0 7.500 11" fill="#5f5f5f"><path d="M0.200 0.300 L7.400 5.500 L0.200 10.700z"/></svg>
<svg width="10.5" height="14" viewBox="0 0 384 512" fill="currentColor" style="position:absolute;left:454.75px;top:558.5px;color:#5f5f5f"><path fill-rule="evenodd" d="M192 0c-41.800 0-77.400 26.700-90.500 64H64C28.700 64 0 92.700 0 128V448c0 35.300 28.700 64 64 64H320c35.300 0 64-28.700 64-64V128c0-35.300-28.700-64-64-64H282.500C269.400 26.700 233.800 0 192 0zm0 64a32 32 0 1 1 0 64 32 32 0 1 1 0-64z"/><circle cx="192" cy="256" r="64" fill="#fff"/><path d="M64 448 C64 390 110 352 160 352 H224 C274 352 320 390 320 448 Z" fill="#fff"/></svg>
<div class="bdg r" style="left:615px;top:555px">菜单</div>
<div class="bdg g" style="left:788px;top:555px">启用</div>
<div class="c " style="left:893px;top:546px;width:174px">0</div>
<div class="c " style="left:1249px;top:546px;width:180px">2025-10-10 19:15:34</div>
<div class="btn p" style="left:1445px;top:552px"><svg class="a" style="left:14.500px;top:8.500px" width="11" height="11" viewBox="0 0 11 11" fill="#5f5f5f"><rect x="0" y="4.800" width="11" height="1.400"/><rect x="4.800" y="0" width="1.400" height="11"/></svg><span style="left:30px">新增</span></div>
<div class="btn b" style="left:1521px;top:552px"><svg class="a" style="left:15.500px;top:9.500px" width="11.500" height="11.500" viewBox="0 0 12 12" fill="#fff"><path d="M0.300 11.700 L1 8.600 L8.300 1.300 L10.700 3.700 L3.400 11z M9 0.700 C9.500 0.200 10.200 0.200 10.700 0.700 L11.300 1.300 C11.800 1.800 11.800 2.500 11.300 3 L11.200 3.100 L8.900 0.800z"/></svg><span style="left:31px">修改</span></div>
<div class="btn o" style="left:1597px;top:552px"><svg class="a" style="left:15px;top:11px" width="11.500" height="9.800" viewBox="0 0 11.500 11" preserveAspectRatio="none" fill="none" stroke="#fff"><path d="M0 1.500 H11.500" stroke-width="1.600"/><path d="M1.500 3 V9.300 Q1.500 10.300 2.500 10.300 H9 Q10 10.300 10 9.300 V3" stroke-width="1.300"/><path d="M4.200 4.200 V8.300 M5.750 4.200 V8.300 M7.300 4.200 V8.300" stroke-width="0.900"/><path d="M4 0.400 H7.500" stroke-width="0.900"/></svg><span style="left:31px">删除</span></div>
</div>
<div class="a" style="left:0;top:585px;width:1680px;height:41px">
<svg class="a" style="left:21.5px;top:15px" width="8" height="12" viewBox="0 0 8 12" fill="none" stroke="#d2d2d2" stroke-width="1.100"><path d="M7 0.500 L1 6 L7 11.500"/></svg>
<div class="a pg" style="left:44px;width:31px;background:#16baaa;border-radius:2px;color:#fff;text-align:center;line-height:27px">1</div>
<svg class="a" style="left:89.5px;top:15px" width="8" height="12" viewBox="0 0 8 12" fill="none" stroke="#d2d2d2" stroke-width="1.100"><path d="M1 0.500 L7 6 L1 11.500"/></svg>
<div class="a pg" style="left:113px;color:#999">到第</div>
<div class="a pg" style="left:147px;width:40px;border:1px solid #eee;border-radius:2px;background:#fff;color:#333;text-align:center;line-height:25px">1</div>
<div class="a pg" style="left:196px;color:#999">页</div>
<div class="a pg" style="left:219px;width:46px;border:1px solid #eee;border-radius:2px;background:#fff;color:#000;text-align:center;line-height:26px">确定</div>
<div class="a pg" style="left:275px;color:#333">共 14 条</div>
<div class="a pg" style="left:329px;width:81px;border:1px solid #eee;border-radius:2px;background:#fff;color:#000;line-height:26px;padding-left:7px">20 条/页<svg class="a" style="left:66px;top:9px" width="10" height="7" viewBox="0 0 10 7" fill="none" stroke="#000" stroke-width="1.800"><path d="M1 1 L5 5 L9 1"/></svg></div>
</div>
</div>
<svg class="a" style="left:1645px;top:822px" width="260" height="88" viewBox="1645 822 260 88">
<defs><clipPath id="wc"><circle cx="469" cy="460" r="389"/></clipPath></defs>
<g transform="translate(1645 822) scale(0.087527)">
<circle cx="469" cy="460" r="389" fill="#3585d6"/>
<g clip-path="url(#wc)">
<path fill="#fff" d="M0 420 L140 560 L235 512 C215 440 260 340 370 292 C450 275 560 330 592 440 C610 520 570 600 490 610 C460 612 440 606 420 596 L455 622 L385 642 L540 650 L605 840 L605 920 L0 920z"/>
<path fill="#fff" d="M345 300 C420 228 540 213 632 230 C638 240 634 250 625 252 C540 240 450 250 385 296z"/>
<path fill="#fff" d="M440 300 C520 255 630 272 708 322 C712 334 702 346 690 344 C620 296 530 282 458 308z"/>
<circle cx="460" cy="437" r="62" fill="#3585d6"/><circle cx="473" cy="438" r="38" fill="#fff"/>
<path fill="#3585d6" d="M375 676 L505 672 L558 850 L498 860 L466 740 L335 745z"/>
<path fill="#3585d6" d="M325 772 L445 766 L470 870 L250 800z"/>
</g></g>
<text x="1722" y="862" font-family='"Noto Sans CJK SC","Liberation Sans",sans-serif' font-weight="900" font-size="29" fill="#3b9df6" stroke="#3b9df6" stroke-width="0.600" textLength="175" lengthAdjust="spacingAndGlyphs" transform="translate(0 862) scale(1 1.120) translate(0 -862)">小蚂蚁资源网</text>
<text x="1717.500" y="891.600" font-family='"DejaVu Sans","Liberation Sans",sans-serif' font-weight="bold" font-size="23.500" fill="#3b9df6" textLength="182" lengthAdjust="spacing">www.xmy7.com</text>
</svg>
</body>
</html>
